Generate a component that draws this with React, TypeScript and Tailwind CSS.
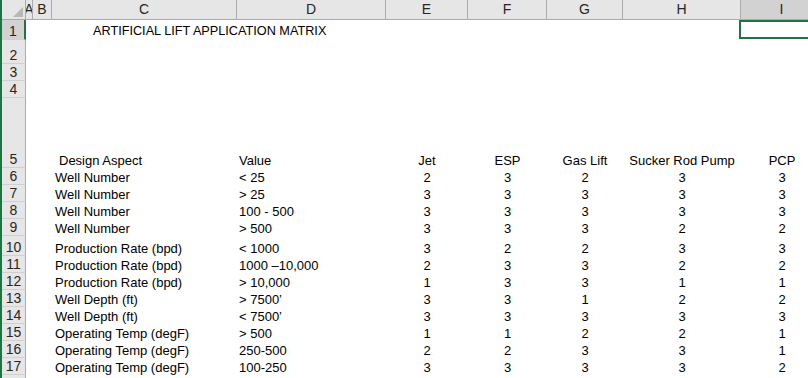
import React from "react";

type Col = { key: string; label: string; width: string; align: "left" | "center" };

const columns: Col[] = [
	{ key: "A", label: "A", width: "w-[7px]", align: "left" },
	{ key: "B", label: "B", width: "w-[19px]", align: "left" },
	{ key: "C", label: "C", width: "w-[185px]", align: "left" },
	{ key: "D", label: "D", width: "w-[149px]", align: "left" },
	{ key: "E", label: "E", width: "w-[82px]", align: "center" },
	{ key: "F", label: "F", width: "w-[79px]", align: "center" },
	{ key: "G", label: "G", width: "w-[76px]", align: "center" },
	{ key: "H", label: "H", width: "w-[118px]", align: "center" },
	{ key: "I", label: "I", width: "w-[82px]", align: "center" },
];

type Row = {
	n: number;
	height: string;
	cells?: Record<string, string>;
};

const matrix: [string, string, number[]][] = [
	["Well Number", "< 25", [2, 3, 2, 3, 3]],
	["Well Number", "> 25", [3, 3, 3, 3, 3]],
	["Well Number", "100 - 500", [3, 3, 3, 3, 3]],
	["Well Number", "> 500", [3, 3, 3, 2, 2]],
	["Production Rate (bpd)", "< 1000", [3, 2, 2, 3, 3]],
	["Production Rate (bpd)", "1000 \u201310,000", [2, 3, 3, 2, 2]],
	["Production Rate (bpd)", "> 10,000", [1, 3, 3, 1, 1]],
	["Well Depth (ft)", "> 7500\u2019", [3, 3, 1, 2, 2]],
	["Well Depth (ft)", "< 7500\u2019", [3, 3, 3, 3, 3]],
	["Operating Temp (degF)", "> 500", [1, 1, 2, 2, 1]],
	["Operating Temp (degF)", "250-500", [2, 2, 3, 3, 1]],
	["Operating Temp (degF)", "100-250", [3, 3, 3, 3, 2]],
];

const rows: Row[] = [
	{ n: 1, height: "h-[20px]" },
	{ n: 2, height: "h-[24px]" },
	{ n: 3, height: "h-[17px]" },
	{ n: 4, height: "h-[17px]" },
	{
		n: 5,
		height: "h-[70px]",
		cells: { C: "Design Aspect", D: "Value", E: "Jet", F: "ESP", G: "Gas Lift", H: "Sucker Rod Pump", I: "PCP" },
	},
	...matrix.map(([aspect, value, nums], i) => ({
		n: i + 6,
		height: i === 4 ? "h-[20px]" : "h-[17px]",
		cells: {
			C: aspect,
			D: value,
			E: String(nums[0]),
			F: String(nums[1]),
			G: String(nums[2]),
			H: String(nums[3]),
			I: String(nums[4]),
		},
	})),
	{ n: 18, height: "h-[17px]" },
];

const CornerCell = () => (
	<div className="w-[24px] h-[20px] shrink-0 bg-[#e6e6e6] border-r border-b border-[#ababab] flex items-end justify-end pr-[2px] pb-[2px]">
		<svg width="10" height="10" viewBox="0 0 10 10">
			<polygon points="10,0 10,10 0,10" fill="#b8b8b8" />
		</svg>
	</div>
);

export default function App() {
	return (
		<div className="w-[808px] h-[378px] overflow-hidden bg-white flex font-['Liberation_Sans',Arial,sans-serif] text-black">
			<div className="w-[2px] shrink-0 bg-[#217346]" />
			<div className="flex flex-col">
				{/* column letters */}
				<div className="flex">
					<CornerCell />
					{columns.map((col) => (
						<div
							key={col.key}
							className={`${col.width} h-[20px] shrink-0 flex items-center justify-center overflow-hidden text-[14px] text-[#262626] border-r border-b border-[#ababab] ${
								col.key === "I" ? "bg-[#d2d2d2]" : "bg-[#e6e6e6]"
							}`}
						>
							{col.label}
						</div>
					))}
				</div>

				{rows.map((row) => (
					<div key={row.n} className={`flex ${row.height} shrink-0`}>
						<div
							className={`w-[24px] shrink-0 flex items-end justify-center text-[14px] leading-[15px] text-[#262626] border-b border-[#d0d0d0] ${
								row.n === 1
									? "bg-[#d2d2d2] border-r-2 border-r-[#217346]"
									: "bg-[#e6e6e6] border-r border-r-[#ababab]"
							}`}
						>
							{row.n}
						</div>
						{columns.map((col) => {
							const text = row.cells?.[col.key];
							return (
								<div
									key={col.key}
									className={`${col.width} shrink-0 relative flex items-end text-[13px] leading-[15px] whitespace-nowrap ${
										col.align === "center" ? "justify-center" : "justify-start"
									} ${col.key === "C" ? (row.n === 5 ? "pl-[7px]" : "pl-[3px]") : ""} ${
										col.key === "D" ? "pl-[2px]" : ""
									}`}
								>
									{row.n === 1 && col.key === "C" && (
										<span className="pl-[38px] pb-[1px] text-[12.7px] overflow-visible">
											ARTIFICIAL LIFT APPLICATION MATRIX
										</span>
									)}
									{row.n === 1 && col.key === "I" && (
										<div className="absolute -left-[2px] top-0 right-0 bottom-[1px] border-2 border-[#217346]" />
									)}
									{text}
								</div>
							);
						})}
					</div>
				))}
			</div>
		</div>
	);
}
